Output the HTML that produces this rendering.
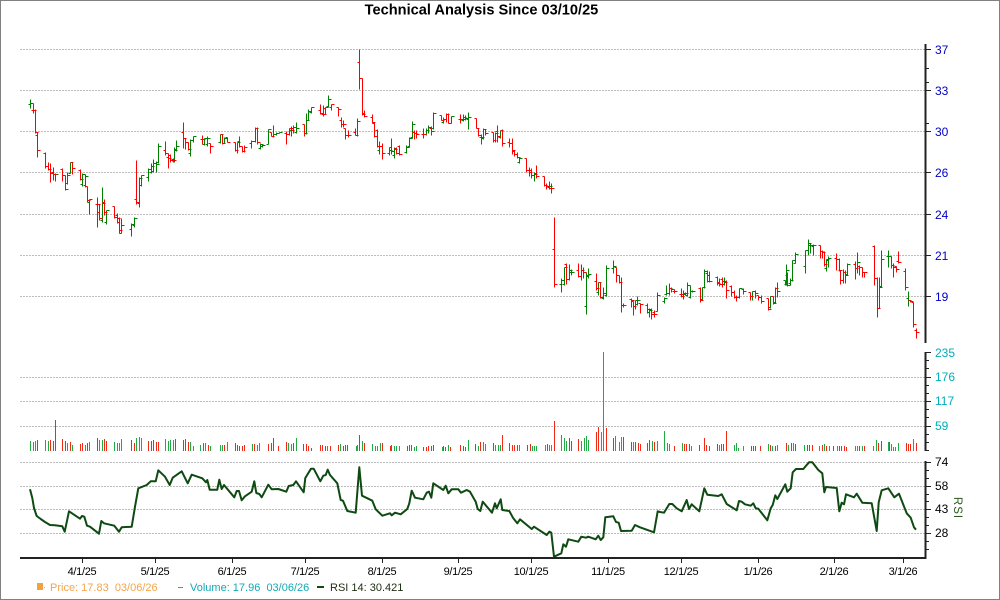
<!DOCTYPE html>
<html><head><meta charset="utf-8"><title>Technical Analysis</title>
<style>
html,body{margin:0;padding:0;background:#fff}
svg{display:block}
text{font-family:"Liberation Sans",Arial,sans-serif}
.p{font-size:12px;fill:#0000c8}
.v{font-size:12px;fill:#00adb8}
.r{font-size:12px;fill:#000}
.x{font-size:11px;fill:#000;text-anchor:middle;letter-spacing:-.3px}
.l{font-size:11px}
</style></head>
<body>
<svg xmlns="http://www.w3.org/2000/svg" width="1000" height="600" viewBox="0 0 1000 600">
<rect width="1000" height="600" fill="#fff"/>
<path d="M0 .5H1000M.5 0V600M999.5 0V600M0 599.5H1000" stroke="#808080" fill="none"/>
<text x="481.5" y="14.500" font-size="14.600" font-weight="bold" text-anchor="middle" fill="#000">Technical Analysis Since 03/10/25</text>

<g stroke="#bdbdbd" stroke-dasharray="2 1" fill="none">
<path d="M20 49.500H925M20 90.500H925M20 131.500H925M20 172.500H925M20 214.500H925M20 255.500H925M20 296.500H925M20 377.500H925M20 401.500H925M20 426.500H925M20 462.500H925M20 486.500H925M20 509.500H925M20 533.500H925"/>
</g>

<g transform="translate(.5 .5)" fill="none" stroke-width="1" shape-rendering="crispEdges">
<path stroke="#008000" d="M30 99V108M28 104h2M30 103h3M55 173V181M53 174h2M55 174h3M67 172V184M65 183h2M67 175h3M70 162V173M68 173h2M70 162h3M82 173V186M80 184h2M82 174h3M85 174V187M83 185h2M85 176h3M89 199V214M87 202h2M89 199h3M102 187V222M100 220h2M102 203h3M106 210V224M104 222h2M106 210h3M121 218V233M119 233h2M121 225h3M131 223V236M129 229h2M131 224h3M134 217V227M132 225h2M134 218h3M139 177V207M137 203h2M139 178h3M141 175V186M139 185h2M141 175h3M148 168V181M146 177h2M148 169h3M151 163V173M149 172h2M151 166h3M153 159V172M151 171h2M153 163h3M156 161V172M154 163h2M156 164h3M158 143V163M156 162h2M158 146h3M174 147V162M172 161h2M174 150h3M176 140V151M174 149h2M176 146h3M190 139V156M188 153h2M190 140h3M193 136V142M191 140h2M193 136h3M204 138V145M202 144h2M204 138h3M207 136V146M205 144h2M207 138h3M220 134V143M218 142h2M220 134h3M224 137V143M222 143h2M224 138h3M237 142V153M235 150h2M237 142h3M251 140V148M249 143h2M251 141h3M255 127V142M253 141h2M255 128h3M260 143V149M258 148h2M260 144h3M262 144V147M260 146h2M262 145h3M268 129V144M266 144h2M268 129h3M273 125V137M271 136h2M273 134h3M276 132V135M274 134h2M276 133h3M279 132V133M279 132h3M289 128V135M287 134h2M289 130h3M296 122V133M294 132h2M296 128h3M306 113V134M304 133h2M306 120h3M308 109V120M306 120h2M308 111h3M311 107V113M309 112h2M311 107h3M328 95V107M326 106h2M328 99h3M357 118V136M355 135h2M357 121h3M379 141V154M377 150h2M379 146h3M389 147V155M387 153h2M389 150h3M394 147V158M392 155h2M394 149h3M406 145V153M404 152h2M406 147h3M409 137V147M407 146h2M409 138h3M412 121V138M410 137h2M412 124h3M426 128V135M424 134h2M426 130h3M428 125V133M426 130h2M428 127h3M433 112V129M431 128h2M433 113h3M443 117V123M441 122h2M443 119h3M451 116V123M449 123h2M451 116h3M463 114V121M461 120h2M463 117h3M465 115V120M463 119h2M465 118h3M468 112V129M466 119h2M468 117h3M483 128V139M481 138h2M483 129h3M495 132V142M493 140h2M495 133h3M500 130V138M498 137h2M500 130h3M519 157V163M517 162h2M519 158h3M534 172V181M532 175h2M534 174h3M549 181V189M547 187h2M549 186h3M561 278V292M559 284h2M561 280h3M564 267V285M562 284h2M564 267h3M569 264V280M567 279h2M569 270h3M571 269V275M569 272h2M571 272h3M581 264V280M579 276h2M581 270h3M586 272V314M584 306h2M586 275h3M588 268V278M586 276h2M588 274h3M598 282V295M596 292h2M598 282h3M603 287V299M601 298h2M603 293h3M606 265V296M604 295h2M606 268h3M613 260V273M611 268h2M613 266h3M635 300V309M633 306h2M635 300h3M637 296V305M635 304h2M637 300h3M649 308V317M647 312h2M649 310h3M657 292V311M655 311h2M657 295h3M664 297V303M662 301h2M664 298h3M666 285V295M664 294h2M666 293h3M669 283V295M667 293h2M669 288h3M685 292V295M683 294h2M685 293h3M687 282V296M685 295h2M687 285h3M690 285V298M688 297h2M690 291h3M692 290V292M690 291h2M692 291h3M702 287V300M700 299h2M702 287h3M704 269V288M702 287h2M704 271h3M724 277V285M722 284h2M724 282h3M739 288V298M737 297h2M739 288h3M752 291V300M750 296h2M752 291h3M755 290V298M753 291h2M755 293h3M770 296V308M768 307h2M770 296h3M775 287V303M773 302h2M775 288h3M785 280V285M783 280h2M786 264V285M784 284h2M786 270h3M790 278V285M788 283h2M790 280h3M792 260V281M790 280h2M792 260h3M795 252V263M793 263h2M795 254h3M805 250V273M803 266h2M805 250h3M808 239V255M806 250h2M808 243h3M810 243V253M808 245h2M810 245h3M813 244V255M811 246h2M813 245h3M826 259V271M824 268h2M826 259h3M828 256V267M826 260h2M828 258h3M843 269V283M841 280h2M843 272h3M847 263V275M845 274h2M847 264h3M857 252V273M855 268h2M857 262h3M879 277V308M877 308h2M879 287h3M881 250V287M879 286h2M881 259h3M888 250V267M886 256h2M888 256h3M891 256V268M889 256h2M891 265h3M908 291V306M906 298h2M908 300h3"/>
<path stroke="#ff0000" d="M33 103V113M31 110h2M33 110h3M35 109V133M33 110h2M35 132h3M37 132V157M35 135h2M37 150h3M45 152V168M43 153h2M45 166h3M48 162V170M46 166h2M48 169h3M50 163V182M48 169h2M50 173h3M53 167V180M51 172h2M53 174h3M62 168V181M60 169h2M62 175h3M65 175V190M63 175h2M65 189h3M72 162V174M70 162h2M72 168h3M80 169V180M78 170h2M80 179h3M87 186V202M85 186h2M87 200h3M97 197V227M95 204h2M97 204h3M99 204V220M97 212h2M99 218h3M104 199V215M102 202h2M104 212h3M114 206V218M112 206h2M114 217h3M117 213V223M115 215h2M117 218h3M119 217V233M117 222h2M119 230h3M136 160V204M134 199h2M136 202h3M165 141V155M163 150h2M165 153h3M168 153V168M166 157h2M168 158h3M170 154V162M168 155h2M170 160h3M173 158V162M171 159h2M173 160h3M183 122V148M181 132h2M183 138h3M185 138V149M183 138h2M185 142h3M188 142V150M186 142h2M188 149h3M202 135V144M200 139h2M202 139h3M210 143V153M208 143h2M210 146h3M222 134V144M220 134h2M222 143h3M227 137V142M225 137h2M227 142h3M235 142V151M233 142h2M235 150h3M239 136V147M237 141h2M239 146h3M242 146V152M240 146h2M242 151h3M244 145V152M242 151h2M244 147h3M257 127V144M255 128h2M257 142h3M271 132V136M269 132h2M271 136h3M286 131V144M284 133h2M286 134h3M291 126V136M289 128h2M291 130h3M293 125V133M291 128h2M293 127h3M304 124V136M302 124h2M304 133h3M320 104V114M318 110h2M320 113h3M323 105V116M321 114h2M323 114h3M325 107V114M323 108h2M325 107h3M331 104V110M329 107h2M331 104h3M338 107V116M336 107h2M338 109h3M341 117V127M339 120h2M341 124h3M343 120V127M341 124h2M343 124h3M345 128V139M343 128h2M345 135h3M348 130V137M346 135h2M348 135h3M355 128V135M353 132h2M355 135h3M359 49V89M357 62h2M359 78h3M362 78V115M360 78h2M362 114h3M364 110V117M362 113h2M364 116h3M372 114V123M370 117h2M372 122h3M374 122V137M372 123h2M374 136h3M377 129V147M375 130h2M377 146h3M382 143V159M380 146h2M382 153h3M391 138V154M389 147h2M391 151h3M396 147V154M394 148h2M396 153h3M399 145V155M397 146h2M399 154h3M414 130V139M412 132h2M414 133h3M416 130V138M414 133h2M416 134h3M423 128V138M421 134h2M423 134h3M431 126V135M429 128h2M431 131h3M441 115V120M439 115h2M441 120h3M446 113V122M444 119h2M446 114h3M448 113V123M446 114h2M448 123h3M460 114V123M458 119h2M460 119h3M476 118V128M474 118h2M476 128h3M478 128V136M476 128h2M478 135h3M481 134V144M479 137h2M481 137h3M485 129V135M483 129h2M485 133h3M493 132V142M491 132h2M493 140h3M497 125V142M495 131h2M497 136h3M502 129V146M500 130h2M502 143h3M509 138V147M507 142h2M509 143h3M512 138V154M510 143h2M512 150h3M514 150V156M512 151h2M514 154h3M517 152V158M515 154h2M517 157h3M526 158V172M524 158h2M526 170h3M529 167V176M527 170h2M529 172h3M531 168V178M529 170h2M531 175h3M536 165V178M534 173h2M536 176h3M544 176V186M542 176h2M544 185h3M546 183V189M544 185h2M546 186h3M551 183V193M549 188h2M551 188h3M554 217V287M552 249h2M554 284h3M566 263V284M564 264h2M566 279h3M578 263V277M576 270h2M578 276h3M583 267V278M581 270h2M583 272h3M596 273V290M594 281h2M596 288h3M600 282V298M598 282h2M600 297h3M616 267V282M614 267h2M616 275h3M619 275V283M617 275h2M619 282h3M621 277V312M619 282h2M621 305h3M623 303V307M621 305h2M623 305h3M631 298V307M629 299h2M631 300h3M633 301V315M631 301h2M633 306h3M640 303V313M638 303h2M640 304h3M647 303V313M645 305h2M647 309h3M651 308V319M649 309h2M651 314h3M654 310V317M652 312h2M654 314h3M671 287V292M669 288h2M671 289h3M674 289V293M672 291h2M674 291h3M681 288V297M679 294h2M681 296h3M683 290V299M681 294h2M683 293h3M700 287V302M698 288h2M700 300h3M707 270V282M705 273h2M707 281h3M709 271V282M707 275h2M709 281h3M717 276V285M715 277h2M717 283h3M719 278V286M717 282h2M719 284h3M722 277V287M720 279h2M722 281h3M726 280V298M724 281h2M726 290h3M731 285V296M729 286h2M731 292h3M734 290V298M732 292h2M734 297h3M736 295V301M734 297h2M736 297h3M743 288V294M741 289h2M743 291h3M750 292V300M748 292h2M750 296h3M758 295V300M756 295h2M758 297h3M761 295V303M759 297h2M761 301h3M768 298V310M766 298h2M768 309h3M773 296V304M771 296h2M773 303h3M777 282V297M775 288h2M777 291h3M787 272V286M785 275h2M787 285h3M820 245V258M818 245h2M820 251h3M822 250V258M820 251h2M822 252h3M824 251V266M822 252h2M824 264h3M836 253V270M834 258h2M836 259h3M839 258V271M837 259h2M839 270h3M840 270V284M838 270h2M840 280h3M845 270V283M843 272h2M845 275h3M855 261V279M853 264h2M855 268h3M859 265V275M857 266h2M859 267h3M862 267V277M860 267h2M862 272h3M864 272V277M862 272h2M864 272h3M874 245V285M872 246h2M874 278h3M877 277V317M875 278h2M877 308h3M893 263V277M891 265h2M893 267h3M896 266V272M894 266h2M896 269h3M898 251V263M896 261h2M898 262h3M905 268V290M903 271h2M905 287h3M910 300V302M908 300h2M910 301h3M913 302V327M911 302h2M913 324h3M916 328V338M914 330h2M916 332h3"/>
</g>

<g transform="translate(.5 0)" fill="none" stroke-width="1">
<path stroke="#22aa44" d="M30 451v-10M33 451v-9M35 451v-10M45 451v-11M48 451v-10M67 451v-8M72 451v-6M85 451v-6M89 451v-9M99 451v-11M102 451v-11M114 451v-9M117 451v-8M119 451v-8M121 451v-12M136 451v-13M139 451v-14M141 451v-13M165 451v-12M168 451v-10M170 451v-11M173 451v-11M190 451v-9M193 451v-5M200 451v-6M205 451v-8M210 451v-5M220 451v-6M222 451v-6M227 451v-9M252 451v-7M257 451v-6M259 451v-8M288 451v-8M291 451v-7M296 451v-13M327 451v-5M340 451v-7M356 451v-5M357 451v-6M362 451v-10M372 451v-7M375 451v-5M377 451v-5M380 451v-8M394 451v-5M396 451v-5M399 451v-5M414 451v-4M416 451v-5M442 451v-4M448 451v-6M460 451v-6M468 451v-11M478 451v-5M483 451v-9M485 451v-7M495 451v-6M498 451v-6M500 451v-6M519 451v-6M532 451v-5M534 451v-5M536 451v-5M545 451v-6M549 451v-6M551 451v-6M561 451v-16M564 451v-13M566 451v-10M581 451v-10M584 451v-13M586 451v-15M588 451v-11M601 451v-19M603 451v-99M615 451v-15M619 451v-9M621 451v-14M633 451v-9M652 451v-10M657 451v-10M664 451v-20M667 451v-8M669 451v-7M682 451v-8M691 451v-5M719 451v-6M734 451v-6M736 451v-8M738 451v-3M743 451v-5M768 451v-7M772 451v-5M777 451v-6M788 451v-6M793 451v-8M804 451v-6M819 451v-5M824 451v-7M829 451v-5M837 451v-5M855 451v-5M857 451v-5M862 451v-5M873 451v-5M876 451v-11M888 451v-9M891 451v-7M893 451v-4M895 451v-4M898 451v-8M913 451v-12"/>
<path stroke="#f02a14" d="M37 451v-11M50 451v-11M53 451v-10M55 451v-31M62 451v-12M65 451v-10M70 451v-9M80 451v-7M82 451v-8M87 451v-8M97 451v-13M104 451v-12M106 451v-10M131 451v-11M134 451v-8M148 451v-10M151 451v-10M153 451v-11M156 451v-9M158 451v-9M175 451v-12M183 451v-11M185 451v-12M188 451v-9M203 451v-8M208 451v-6M224 451v-6M235 451v-8M237 451v-6M239 451v-5M242 451v-5M244 451v-6M254 451v-7M268 451v-7M271 451v-8M273 451v-13M278 451v-5M286 451v-9M293 451v-8M303 451v-7M306 451v-7M308 451v-5M311 451v-3M320 451v-6M322 451v-6M325 451v-5M330 451v-5M338 451v-6M343 451v-5M345 451v-6M347 451v-6M359 451v-16M364 451v-8M382 451v-8M390 451v-5M391 451v-6M407 451v-5M409 451v-6M411 451v-6M423 451v-4M426 451v-4M428 451v-5M431 451v-5M433 451v-6M443 451v-5M445 451v-4M450 451v-4M460 451v-6M463 451v-5M465 451v-4M475 451v-7M480 451v-9M493 451v-8M502 451v-16M509 451v-8M512 451v-6M514 451v-6M517 451v-6M527 451v-6M530 451v-7M547 451v-7M554 451v-30M569 451v-13M571 451v-10M578 451v-12M596 451v-19M598 451v-24M606 451v-23M613 451v-13M623 451v-14M631 451v-9M635 451v-9M638 451v-8M640 451v-7M647 451v-8M649 451v-11M654 451v-9M674 451v-5M684 451v-7M686 451v-7M689 451v-7M699 451v-6M704 451v-13M706 451v-6M709 451v-5M717 451v-7M721 451v-7M723 451v-7M726 451v-20M751 451v-5M753 451v-5M755 451v-5M760 451v-5M770 451v-6M775 451v-5M786 451v-8M791 451v-8M795 451v-7M807 451v-6M809 451v-6M812 451v-6M822 451v-6M826 451v-5M833 451v-5M839 451v-5M841 451v-5M844 451v-5M846 451v-4M859 451v-5M864 451v-5M878 451v-8M881 451v-10M889 451v-9M906 451v-8M908 451v-7M910 451v-7M916 451v-8"/>
</g>

<polyline fill="none" stroke="#0e4a12" stroke-width="2" stroke-linejoin="round" points="30,489.300 32.300,498 34,508 36.700,516 40.700,519 45,522 50,525 55,525.300 62.300,526.300 64.700,531.700 69,511.300 80,518.700 82,516 84.300,516.700 87,525.700 90,526.700 99,533.700 101.300,521 104,523.300 114.300,525.700 119,531.700 121.700,527.300 131.700,526.700 135,506.700 138.300,488.300 146.700,485 150.700,481.300 155.700,481.300 158.300,470.300 165,476.700 169.700,485 172.700,477.700 181.700,471.300 187.700,483.300 191.700,474.700 202.300,478.300 206,482.300 207.300,480 209.700,489.700 217.300,489.700 219.300,479.700 221.700,489 224,485 234.300,497.300 236.700,491 239,491 241.700,500.300 245,496.300 251.700,491.700 254.300,481.300 256.300,493 259.300,494 261.700,497.300 268.300,484.700 271.700,489.300 278.300,489 286.300,491.700 288.700,486 293.300,485 296,481.300 303.700,492.300 305.300,478 311,468.700 313.700,468.700 320.300,481.300 323.300,475.700 325.700,475 327.700,469.700 330,475 337.300,483.300 340.700,500 343,500.700 347.300,511 355.700,512.700 359.300,467.300 362,495.700 372.300,500.700 375.700,509.300 382.300,515.700 390,513.300 391.700,515.300 395,512.700 400.700,514.300 407.300,509 409.300,503.300 411.700,490.700 415,497.700 423.300,499.300 426.700,492.700 429,491.700 431.300,497.700 433.300,483.300 443.300,490 445.700,485.700 448.300,493.300 451.700,489.300 458.300,489.300 461,492.700 466.700,490 470,491.700 475.700,501.700 477.700,509 480.300,511 482.700,501.700 492,512.700 495,503.300 496.700,508.300 500.700,499.300 502.300,510 509.300,511 513.300,518.300 517.300,523.300 520,519.300 531.700,529 534,526.700 546.700,535 549.300,531.700 551.300,532.700 554,556.700 561.300,553.300 563.300,544.300 566,546.700 568.300,539.300 578.300,541.700 581.300,536.700 586,537.700 588.300,536.700 595.700,539.300 598.300,535.700 600.700,540 603.300,537.300 605.300,517.300 613.300,516.300 616,522 618.700,522.700 621,531 631.700,530.700 635,525 640,527.300 654,532.300 657.700,511.300 660,512 664,512.700 669.300,504 672.300,504 676.700,508.300 681.700,511.300 686.700,500 689,509 691.700,504.300 699.300,511.300 704.300,488.300 707.300,494.700 718.300,496 721.700,494.300 726.700,504 736.700,510.300 739,501 741.700,501.700 745,504.300 750.700,505.700 753.300,503.300 755.700,508.300 758.300,508.700 767.300,520.300 770.700,508.300 772.700,505 775.300,495.300 777.300,499 785.300,484.300 787.300,491.700 790.700,488.300 792.700,472.300 796,469 803.300,469 809,462.300 812.300,462.300 818.300,470 822.300,473.300 824.300,492.300 826,487 836.700,488 839.300,511.300 841.700,502.700 844,504.300 846,494.300 854,497.300 856.700,493.700 862.300,502.700 871.700,503.300 876.700,531 878.700,502.300 881.700,490.300 888.300,488.300 894.300,497.300 899,493.700 906.700,513.300 910.700,517.700 914,527.300 916,529.700"/>

<g fill="none" stroke="#222" shape-rendering="crispEdges">
<path stroke-width="2" d="M925.500 44V343M925.500 352V451M925.500 461V559M20 558H926"/>
<path stroke-width="1" d="M926 49.500h5M926 90.500h5M926 131.500h5M926 172.500h5M926 214.500h5M926 255.500h5M926 296.500h5M926 68.500h3M926 82.500h3M926 123.500h3M926 352.500h5M926 377.500h5M926 401.500h5M926 426.500h5M926 360.500h3M926 368.500h3M926 385.500h3M926 393.500h3M926 409.500h3M926 417.500h3M926 434.500h3M926 442.500h3M926 450.500h3M926 462.500h5M926 486.500h5M926 509.500h5M926 533.500h5M926 470.500h3M926 478.500h3M926 494.500h3M926 501.500h3M926 517.500h3M926 525.500h3M926 541.500h3M926 549.500h3"/>
<path stroke-width="1" d="M82.500 558v5M155.500 558v5M232.500 558v5M305.500 558v5M382.500 558v5M458.500 558v5M531.500 558v5M608.500 558v5M681.500 558v5M758.500 558v5M834.500 558v5M903.500 558v5"/>
</g>

<text class="p" x="935" y="54">37</text>
<text class="p" x="935" y="95">33</text>
<text class="p" x="935" y="136">30</text>
<text class="p" x="935" y="177">26</text>
<text class="p" x="935" y="219">24</text>
<text class="p" x="935" y="260">21</text>
<text class="p" x="935" y="301">19</text>
<text class="v" x="935" y="357">235</text>
<text class="v" x="935" y="381">176</text>
<text class="v" x="935" y="405">117</text>
<text class="v" x="935" y="430">59</text>
<text class="r" x="935" y="466">74</text>
<text class="r" x="935" y="490">58</text>
<text class="r" x="935" y="513">43</text>
<text class="r" x="935" y="537">28</text>
<text x="0" y="0" font-size="11.500" fill="#2c5a1c" text-anchor="middle" letter-spacing="1" transform="translate(954 508) rotate(90)">RSI</text>

<text class="x" x="82" y="575">4/1/25</text>
<text class="x" x="155" y="575">5/1/25</text>
<text class="x" x="232" y="575">6/1/25</text>
<text class="x" x="305" y="575">7/1/25</text>
<text class="x" x="382" y="575">8/1/25</text>
<text class="x" x="458" y="575">9/1/25</text>
<text class="x" x="531" y="575">10/1/25</text>
<text class="x" x="608" y="575">11/1/25</text>
<text class="x" x="681" y="575">12/1/25</text>
<text class="x" x="758" y="575">1/1/26</text>
<text class="x" x="834" y="575">2/1/26</text>
<text class="x" x="903" y="575">3/1/26</text>

<rect x="37" y="583" width="6" height="7" fill="#f2a23c"/>
<rect x="44" y="587" width="1" height="1" fill="#f2a23c"/>
<text class="l" x="50" y="591" fill="#f5a54a" xml:space="preserve">Price: 17.83  03/06/26</text>
<rect x="178" y="587" width="5" height="1" fill="#10b0b8"/>
<text class="l" x="190" y="591" fill="#12aab4" xml:space="preserve">Volume: 17.96  03/06/26</text>
<rect x="317" y="586" width="7" height="2" fill="#0e4a12"/>
<text class="l" x="330" y="591" fill="#1c2c10">RSI 14: 30.421</text>
</svg>
</body></html>
